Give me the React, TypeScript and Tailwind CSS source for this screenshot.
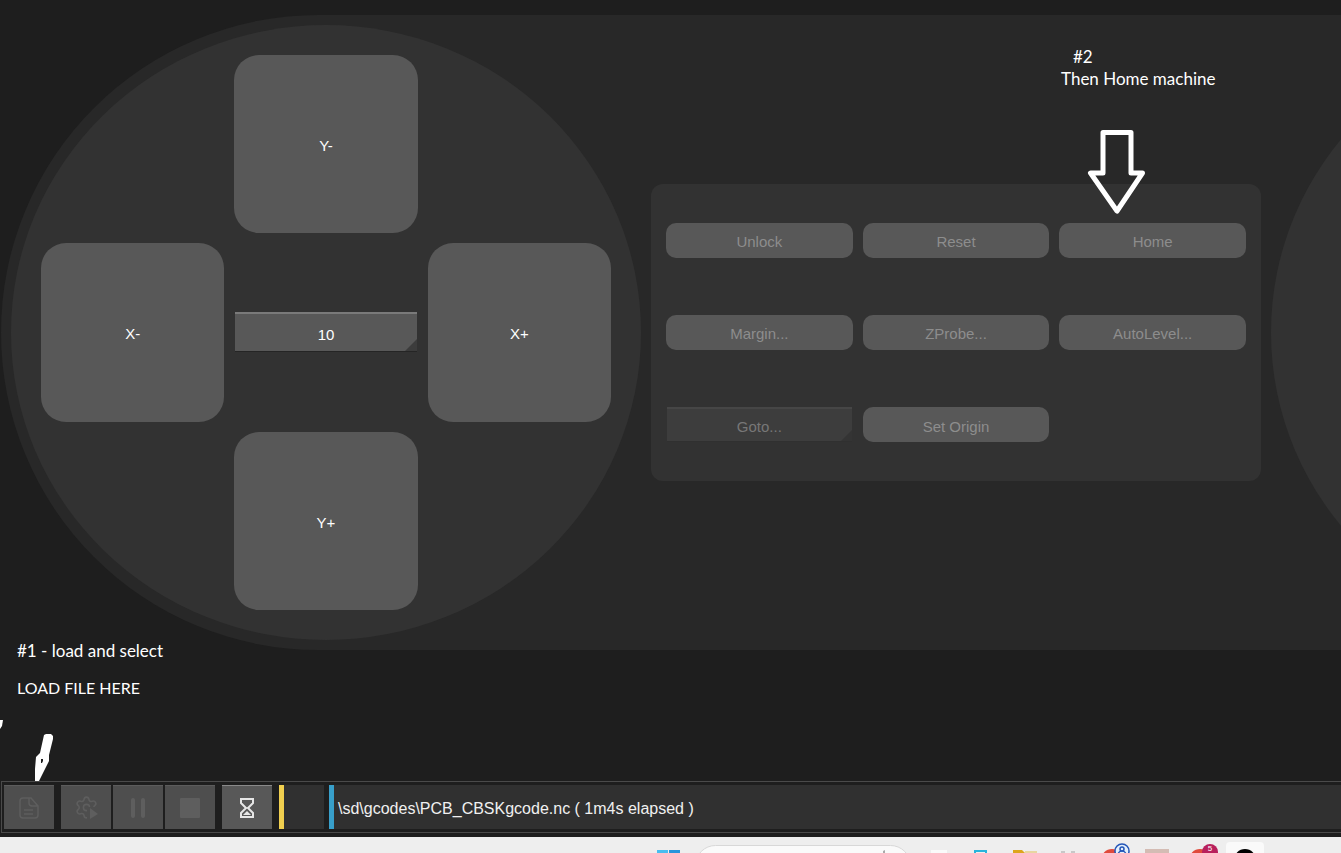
import React from 'react';
import { Settings } from 'lucide-react';

type PadKey = 'Y-' | 'X-' | 'X+' | 'Y+';

const STEPS = ['0.1', '1', '10', '50'];

const JogButton: React.FC<{ label: PadKey; className: string }> = ({ label, className }) => (
  <button className={`rounded-[25px] bg-[#585858] text-white text-[15px] pt-1 ${className}`}>
    {label}
  </button>
);

const ActionButton: React.FC<{ label: string }> = ({ label }) => (
  <button disabled className="h-[35px] rounded-[10px] bg-[#585858] text-[#8d8d8d] text-[15px] pt-1">
    {label}
  </button>
);

const JogPad = () => (
  <div className="w-[630px] shrink-0 rounded-[50%] bg-[#323232] p-[30px] grid grid-cols-3 grid-rows-3 gap-2.5">
    <JogButton label="Y-" className="col-start-2" />
    <JogButton label="X-" className="col-start-1 row-start-2" />
    <div className="relative col-start-2 row-start-2 self-center mx-px">
      <select
        aria-label="Jog step"
        defaultValue="10"
        className="block w-full h-10 appearance-none bg-[#585858] border-t-2 border-t-[#7a7a7a] border-b border-b-[#252525] text-white text-[15px] text-center pt-1"
      >
        {STEPS.map((s) => (
          <option key={s}>{s}</option>
        ))}
      </select>
      <svg className="absolute right-0 bottom-px pointer-events-none" width="12" height="12">
        <path d="M12 0V12H0z" fill="#3c3c3c" />
      </svg>
    </div>
    <JogButton label="X+" className="col-start-3 row-start-2" />
    <JogButton label="Y+" className="col-start-2 row-start-3" />
  </div>
);

const ActionCard = () => (
  <div className="relative w-[610px] h-[297px] shrink-0 self-center rounded-[12px] bg-[#323232] p-[15px] grid grid-cols-3 grid-rows-3 gap-2.5 items-center">
    <ActionButton label="Unlock" />
    <ActionButton label="Reset" />
    <ActionButton label="Home" />
    <ActionButton label="Margin..." />
    <ActionButton label="ZProbe..." />
    <ActionButton label="AutoLevel..." />
    <div className="relative mx-px">
      <select
        disabled
        aria-label="Goto"
        className="block w-full h-[35px] appearance-none bg-[#3d3d3d] border-t-2 border-t-[#464646] border-b border-b-[#303030] text-[#777777] text-[15px] text-center pt-1 opacity-100"
      >
        <option>Goto...</option>
      </select>
      <svg className="absolute right-0 bottom-px pointer-events-none" width="11" height="11">
        <path d="M11 0V11H0z" fill="#343434" />
      </svg>
    </div>
    <ActionButton label="Set Origin" />

    {/* note pinned above the Home button */}
    <div className="absolute left-[410px] -top-[138px] text-white font-['Lato',sans-serif] text-[17px] leading-[22px]">
      <p className="pl-3">#2</p>
      <p className="whitespace-nowrap">Then Home machine</p>
    </div>
    <svg className="absolute left-[436px] -top-[56px]" width="60" height="88" fill="none">
      <path
        d="M16 4.5H44V45H55.500L30 83L3.500 45H16z"
        stroke="#ffffff"
        strokeWidth="5"
        strokeLinejoin="round"
      />
    </svg>
  </div>
);

const ToolButton: React.FC<{ label: string; active?: boolean; children: React.ReactNode }> = ({
  label,
  active,
  children,
}) => (
  <button
    aria-label={label}
    disabled={!active}
    className={`w-[50px] h-11 shrink-0 flex items-center justify-center border-t ${
      active ? 'bg-[#585858] border-t-[#8a8a8a] text-[#e6e6e6]' : 'bg-[#4e4e4e] border-t-[#5c5c5c] text-[#5e5e5e]'
    }`}
  >
    {children}
  </button>
);

const StatusBar = () => (
  <footer className="h-[52px] shrink-0 ml-px border border-r-0 border-[#4a4a4a] pl-0.5 flex items-center">
    <ToolButton label="Load file">
      <svg width="20" height="22" viewBox="0 0 20 22" fill="none" stroke="currentColor" strokeWidth="1.500">
        <path d="M10 1H4Q1 1 1 4V18Q1 21 4 21H16Q19 21 19 18V9L12 1H10V6Q10 9 13 9H19M5 13H14M5 17H14" />
      </svg>
    </ToolButton>
    <div className="ml-[7px] flex gap-0.5">
      <ToolButton label="Configure and run">
        <span className="relative">
          <Settings size={25} strokeWidth={1.5} />
          <svg className="absolute right-0 bottom-0" width="12" height="13">
            <path d="M0 0H12V13H0z" fill="#4e4e4e" />
            <path d="M3 1L11 7L3 12z" fill="currentColor" />
          </svg>
        </span>
      </ToolButton>
      <ToolButton label="Pause">
        <svg width="16" height="20" fill="currentColor">
          <rect x="1" width="4" height="20" rx="2" />
          <rect x="11" width="4" height="20" rx="2" />
        </svg>
      </ToolButton>
      <ToolButton label="Stop">
        <svg width="20" height="20" fill="currentColor">
          <rect width="20" height="20" rx="1" />
        </svg>
      </ToolButton>
    </div>
    <div className="ml-[7px]">
      <ToolButton label="Job progress" active>
        <svg width="14" height="20" viewBox="0 0 14 20" fill="none" stroke="currentColor" strokeWidth="2">
          <path d="M1 1H13V5L8 10L13 15V19H1V15L6 10L1 5z" />
          <path d="M3 17L7 13L11 17z" fill="currentColor" stroke="none" />
        </svg>
      </ToolButton>
    </div>
    <div className="ml-[7px] w-[45px] h-11 shrink-0 bg-[#303030] border-l-[5px] border-[#f0cf4f]" />
    <div className="ml-[5px] flex-1 h-11 bg-[#303030] border-l-[5px] border-[#389fca] pl-1 pt-1 flex items-center text-[#f0f0f0] text-[16px] whitespace-nowrap">
      \sd\gcodes\PCB_CBSKgcode.nc ( 1m4s elapsed )
    </div>
  </footer>
);

const Taskbar = () => (
  <div className="h-4 shrink-0 mt-1 bg-[#eeeeee] overflow-hidden flex justify-center">
    <svg width="1341" height="16" className="shrink-0">
      <path d="M657 13h11v3h-11z" fill="#48bdf0" />
      <path d="M669 13h11v3h-11z" fill="#2795dc" />
      <rect x="695.500" y="8.500" width="215" height="40" rx="20" fill="#fafafa" stroke="#d8d8d8" />
      <path d="M883 14l2-1v3h-2z" fill="#aaaaaa" />
      <rect x="931" y="13" width="16" height="6" fill="#fafafa" />
      <path d="M975 20v-6h11v6" fill="none" stroke="#28b4dc" strokeWidth="2" />
      <path d="M1013 16v-3h9l3 3z" fill="#dda51c" />
      <path d="M1025 14h12v2h-12z" fill="#e8d6a0" />
      <path d="M1061 14h4v2h-4zM1071 14h4v2h-4z" fill="#c8c8c8" />
      <circle cx="1112" cy="23" r="11" fill="#e04a3c" />
      <circle cx="1122" cy="14" r="7" fill="#e4f0fc" stroke="#2456b8" strokeWidth="1.500" />
      <circle cx="1122" cy="12" r="2" fill="none" stroke="#2456b8" strokeWidth="1.500" />
      <path d="M1118 18a4 4 0 0 1 8 0" fill="none" stroke="#2456b8" strokeWidth="1.500" />
      <rect x="1145" y="12" width="24" height="5" fill="#d4bcb4" />
      <circle cx="1200" cy="23" r="11" fill="#e04a3c" />
      <circle cx="1210" cy="15" r="8" fill="#b8205c" />
      <text x="1210" y="14" fill="#ffffff" fontSize="8" textAnchor="middle">5</text>
      <rect x="1226" y="5" width="38" height="20" rx="4" fill="#fafafa" />
      <circle cx="1245" cy="23" r="11" fill="#000000" />
    </svg>
  </div>
);

export default function App() {
  return (
    <div className="h-screen min-h-[853px] flex flex-col overflow-hidden bg-[#1e1e1e] font-['Liberation_Sans',Arial,sans-serif]">
      <main className="flex-1 flex flex-col pt-[15px]">
        <section className="ml-px h-[635px] shrink-0 rounded-l-[325px] bg-[#282828] p-2.5 flex gap-2.5 overflow-hidden">
          <JogPad />
          <ActionCard />
          <div className="w-[630px] shrink-0 rounded-[50%] bg-[#323232]" />
        </section>
        <div className="relative flex-1 pl-[17px] text-white font-['Lato',sans-serif] text-[17px] leading-[22px]">
          <p className="-mt-2.5">#1 - load and select</p>
          <p className="mt-[15px] text-[16px]">LOAD FILE HERE</p>
          <svg className="absolute left-0 bottom-0" width="60" height="66">
            <path d="M0 5L3 5L2 11L0 14z" fill="#ffffff" />
            <path
              d="M44 20L46 19H51L53 21V24L49 40V46L39 66H35V54L36 42L40 38zM41 44V48H42L43 46V44z"
              fill="#ffffff"
              fillRule="evenodd"
            />
          </svg>
        </div>
      </main>
      <StatusBar />
      <Taskbar />
    </div>
  );
}
